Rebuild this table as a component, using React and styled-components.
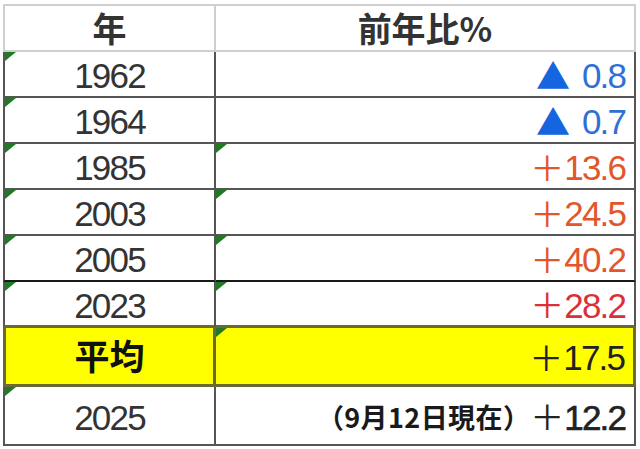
import React from 'react'
import styled, { createGlobalStyle } from 'styled-components'

const GlobalStyle = createGlobalStyle`
  html, body {
    margin: 0;
    padding: 0;
    background: #ffffff;
  }
  body {
    font-family: "Liberation Sans", "Noto Sans CJK JP", sans-serif;
  }
`

const Page = styled.div`
  padding: 4px 0 0 3px;
  width: 640px;
  height: 449px;
  box-sizing: border-box;
  overflow: hidden;
`

const Grid = styled.div`
  display: grid;
  grid-template-columns: 213px 420px;
  grid-template-rows: 48px repeat(6, 46px) 59px 59px;
`

const Cell = styled.div`
  position: relative;
  box-sizing: border-box;
  display: flex;
  align-items: center;
  justify-content: ${({ $align }) => ($align === 'right' ? 'flex-end' : 'center')};
  padding: ${({ $align }) => ($align === 'right' ? '3px 7px 0 0' : '3px 0 0 0')};
  background: ${({ $bg }) => $bg || '#ffffff'};
  border-right: ${({ $right }) => $right || '2px solid #555'};
  border-bottom: ${({ $bottom }) => $bottom || '2px solid #555'};
  border-left: ${({ $left }) => $left || 'none'};
  border-top: ${({ $top }) => $top || 'none'};
  white-space: nowrap;
`

const Flag = styled.span`
  position: absolute;
  top: 0;
  left: 0;
  width: 11px;
  height: 9px;
  background: #1f7a23;
  clip-path: polygon(0 0, 100% 0, 0 100%);
`

const HeadText = styled.span`
  font-family: "Noto Sans CJK JP", sans-serif;
  font-weight: 700;
  font-size: 34px;
  line-height: 1;
  color: #333;
  margin-top: -4px;
`

const YearText = styled.span`
  font-family: "Liberation Sans", sans-serif;
  font-size: 35px;
  letter-spacing: -1.8px;
  line-height: 1;
  color: #333;
`

const LabelText = styled.span`
  font-family: "Noto Sans CJK JP", sans-serif;
  font-weight: 700;
  font-size: 35px;
  line-height: 1;
  color: #111;
  margin-top: -6px;
`

const Value = styled.span`
  display: flex;
  align-items: center;
  color: ${({ $color }) => $color};
  line-height: 1;
`

const Mark = styled.span`
  font-family: "Noto Sans CJK JP", sans-serif;
  font-size: ${({ $size }) => $size || 34}px;
  font-weight: 400;
  color: ${({ $tint }) => $tint || 'inherit'};
  margin-right: ${({ $gap }) => $gap || 0}px;
  margin-top: -2px;
`

const Num = styled.span`
  font-family: "Liberation Sans", sans-serif;
  font-size: 35px;
  letter-spacing: -1.8px;
  margin-right: 1.8px;
  -webkit-text-stroke: ${({ $bold }) => ($bold ? '0.6px' : '0')};
`

const Note = styled.span`
  font-family: "Noto Sans CJK JP", sans-serif;
  font-weight: 700;
  font-size: 27px;
  letter-spacing: 0.4px;
  color: #1a1a1a;
  margin-top: -2px;
`

const BLUE = '#2f6fd6'
const ORANGE = '#e2562c'
const RED = '#dc3038'
const DARK = '#222'

const GREY = '2px solid #cfcfcf'
const OLIVE = '3px solid #6b6a34'

const rows = [
  { year: '1962', sign: '▲', value: '0.8', color: BLUE, flagValue: false },
  { year: '1964', sign: '▲', value: '0.7', color: BLUE, flagValue: false },
  { year: '1985', sign: '＋', value: '13.6', color: ORANGE, flagValue: true },
  { year: '2003', sign: '＋', value: '24.5', color: ORANGE, flagValue: true },
  { year: '2005', sign: '＋', value: '40.2', color: ORANGE, flagValue: true, bottom: '2px solid #1a1a1a' },
  { year: '2023', sign: '＋', value: '28.2', color: RED, flagValue: true, bottom: OLIVE },
]

const App = () => {
  return (
    <>
      <GlobalStyle />
      <Page>
        <Grid>
          <Cell $top={GREY} $left={GREY} $right={GREY} $bottom={GREY}>
            <HeadText>年</HeadText>
          </Cell>
          <Cell $top={GREY} $right={GREY} $bottom={GREY}>
            <HeadText>前年比%</HeadText>
          </Cell>

          {rows.map((r) => (
            <React.Fragment key={r.year}>
              <Cell $left="2px solid #555" $bottom={r.bottom}>
                <Flag />
                <YearText>{r.year}</YearText>
              </Cell>
              <Cell $align="right" $bottom={r.bottom}>
                {r.flagValue && <Flag />}
                <Value $color={r.color}>
                  {r.sign === '▲' ? (
                    <Mark $size={34} $gap={12} $tint="#1565e0">▲</Mark>
                  ) : (
                    <Mark>＋</Mark>
                  )}
                  <Num>{r.value}</Num>
                </Value>
              </Cell>
            </React.Fragment>
          ))}

          <Cell $bg="#ffff00" $left={OLIVE} $right={OLIVE} $bottom={OLIVE}>
            <LabelText>平均</LabelText>
          </Cell>
          <Cell $bg="#ffff00" $align="right" $right={OLIVE} $bottom={OLIVE}>
            <Flag />
            <Value $color={DARK}>
              <Mark>＋</Mark>
              <Num>17.5</Num>
            </Value>
          </Cell>

          <Cell $left="2px solid #555">
            <Flag />
            <YearText>2025</YearText>
          </Cell>
          <Cell $align="right">
            <Value $color={DARK}>
              <Note>（9月12日現在）</Note>
              <Mark>＋</Mark>
              <Num $bold>12.2</Num>
            </Value>
          </Cell>
        </Grid>
      </Page>
    </>
  )
}

export default App
